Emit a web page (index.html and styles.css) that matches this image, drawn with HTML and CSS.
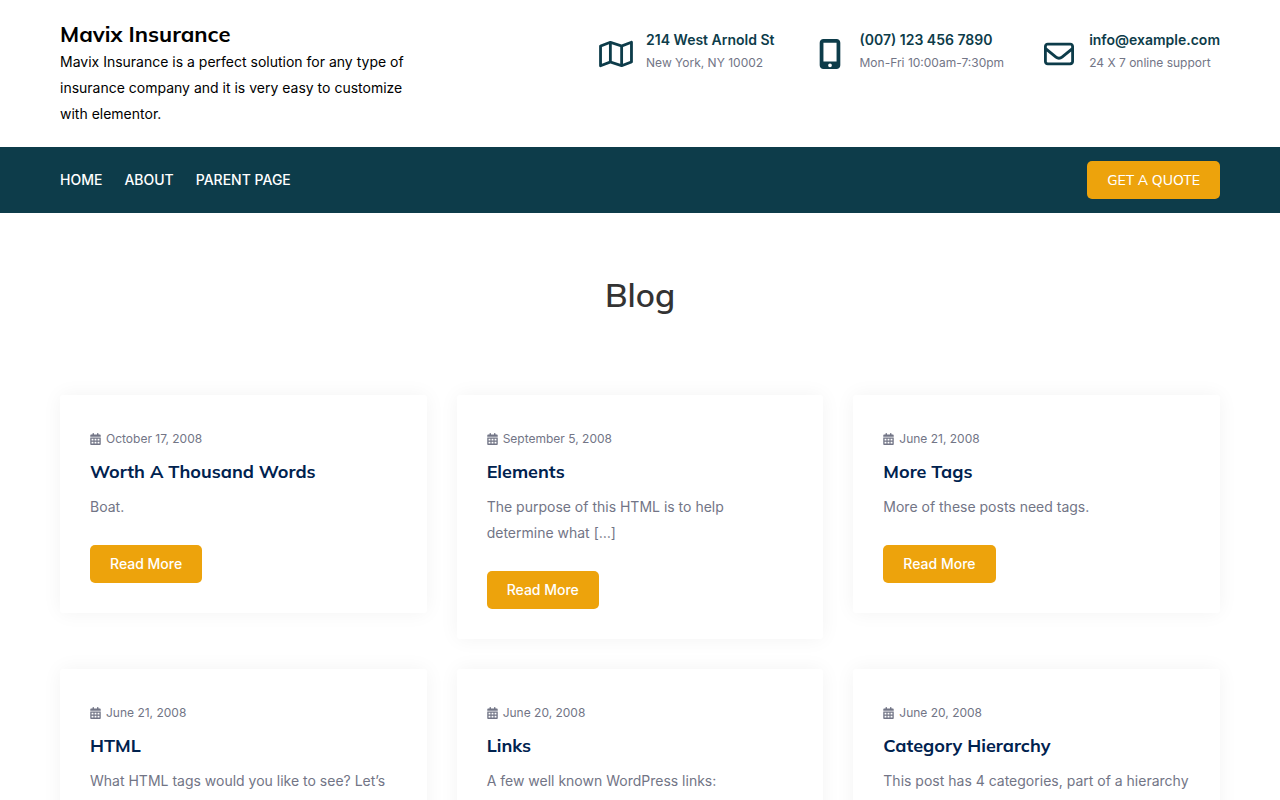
FILE: index.html
```html
<!DOCTYPE html>
<html lang="en">
<head>
    <meta charset="UTF-8">
    <meta name="viewport" content="width=device-width, initial-scale=1">
    <title>Blog - Mavix Insurance</title>
    <link rel="stylesheet" href="styles.css">
</head>
<body>
<svg class="sprite" aria-hidden="true">
    <symbol id="calendar" viewBox="0 0 448 512">
        <path d="M128 0c17.700 0 32 14.300 32 32V64H288V32c0-17.700 14.300-32 32-32s32 14.300 32 32V64h48c26.500 0 48 21.500 48 48v48H0V112C0 85.500 21.500 64 48 64H96V32c0-17.700 14.300-32 32-32zM0 192H448V464c0 26.500-21.500 48-48 48H48c-26.500 0-48-21.500-48-48V192zm56 56v72h80v-72zm128 0v72h80v-72zm128 0v72h80v-72zM56 376v72h80v-72zm128 0v72h80v-72zm128 0v72h80v-72z" fill-rule="evenodd"/>
    </symbol>
</svg>

<header class="site-header">
    <div class="container header-inner">
        <div class="branding">
            <p class="site-title"><a href="#">Mavix Insurance</a></p>
            <p class="site-description">Mavix Insurance is a perfect solution for any type of insurance company and it is very easy to customize with elementor.</p>
        </div>
        <div class="contact-list">
            <div class="contact">
                <svg class="contact-icon" viewBox="0 0 576 512" width="34" height="30"><path d="M565.6 36.2C572.1 40.7 576 48.1 576 56V392c0 10-6.2 18.9-15.5 22.4l-168 64c-5.2 2-10.9 2.1-16.1 .3L192.500 417.500l-160 61c-7.4 2.8-15.7 1.8-22.2-2.7S0 463.900 0 456V120c0-10 6.100-18.900 15.500-22.400l168-64c5.200-2 10.900-2.100 16.100-.3L383.500 94.500l160-61c7.400-2.800 15.700-1.800 22.200 2.700zM48 136.500V421.200l120-45.700V90.800L48 136.500zM360 422.700V137.300l-144-48V374.700l144 48zm48-1.500l120-45.700V90.800L408 136.500V421.200z"/></svg>
                <div>
                    <p class="contact-title">214 West Arnold St</p>
                    <p class="contact-text">New York, NY 10002</p>
                </div>
            </div>
            <div class="contact">
                <svg class="contact-icon" viewBox="0 0 384 512" width="23" height="30"><path d="M16 64C16 28.700 44.700 0 80 0H304c35.300 0 64 28.700 64 64V448c0 35.300-28.700 64-64 64H80c-35.300 0-64-28.700-64-64V64zM224 448a32 32 0 1 0 -64 0 32 32 0 1 0 64 0zM304 64H80V384H304V64z" fill-rule="evenodd"/></svg>
                <div>
                    <p class="contact-title">(007) 123 456 7890</p>
                    <p class="contact-text">Mon-Fri 10:00am-7:30pm</p>
                </div>
            </div>
            <div class="contact">
                <svg class="contact-icon" viewBox="0 0 512 512" width="30" height="30"><path d="M64 112c-8.800 0-16 7.200-16 16v22.100L220.500 291.700c20.700 17 50.400 17 71.100 0L464 150.100V128c0-8.800-7.200-16-16-16H64zM48 212.200V384c0 8.800 7.200 16 16 16H448c8.800 0 16-7.200 16-16V212.200L322 328.800c-38.400 31.500-93.700 31.500-132 0L48 212.200zM0 128C0 92.700 28.700 64 64 64H448c35.300 0 64 28.700 64 64V384c0 35.300-28.700 64-64 64H64c-35.300 0-64-28.700-64-64V128z"/></svg>
                <div>
                    <p class="contact-title">info@example.com</p>
                    <p class="contact-text">24 X 7 online support</p>
                </div>
            </div>
        </div>
    </div>
</header>

<div class="navbar">
    <div class="container navbar-inner">
        <nav class="menu">
            <a href="#">HOME</a>
            <a href="#">ABOUT</a>
            <a href="#">PARENT PAGE</a>
        </nav>
        <a class="btn btn-quote" href="#">GET A QUOTE</a>
    </div>
</div>

<main class="container">
    <h1 class="page-title">Blog</h1>
    <div class="posts">
        <article class="post">
            <p class="post-date"><svg class="date-icon"><use href="#calendar"/></svg>October 17, 2008</p>
            <h2 class="post-title"><a href="#">Worth A Thousand Words</a></h2>
            <p class="post-text">Boat.</p>
            <a class="btn" href="#">Read More</a>
        </article>
        <article class="post">
            <p class="post-date"><svg class="date-icon"><use href="#calendar"/></svg>September 5, 2008</p>
            <h2 class="post-title"><a href="#">Elements</a></h2>
            <p class="post-text">The purpose of this HTML is to help determine what […]</p>
            <a class="btn" href="#">Read More</a>
        </article>
        <article class="post">
            <p class="post-date"><svg class="date-icon"><use href="#calendar"/></svg>June 21, 2008</p>
            <h2 class="post-title"><a href="#">More Tags</a></h2>
            <p class="post-text">More of these posts need tags.</p>
            <a class="btn" href="#">Read More</a>
        </article>
        <article class="post">
            <p class="post-date"><svg class="date-icon"><use href="#calendar"/></svg>June 21, 2008</p>
            <h2 class="post-title"><a href="#">HTML</a></h2>
            <p class="post-text">What HTML tags would you like to see? Let’s</p>
            <a class="btn" href="#">Read More</a>
        </article>
        <article class="post">
            <p class="post-date"><svg class="date-icon"><use href="#calendar"/></svg>June 20, 2008</p>
            <h2 class="post-title"><a href="#">Links</a></h2>
            <p class="post-text">A few well known WordPress links:</p>
            <a class="btn" href="#">Read More</a>
        </article>
        <article class="post">
            <p class="post-date"><svg class="date-icon"><use href="#calendar"/></svg>June 20, 2008</p>
            <h2 class="post-title"><a href="#">Category Hierarchy</a></h2>
            <p class="post-text">This post has 4 categories, part of a hierarchy</p>
            <a class="btn" href="#">Read More</a>
        </article>
    </div>
</main>
</body>
</html>
```
FILE: styles.css
```css
* {
    box-sizing: border-box;
}

body {
    margin: 0;
    background-color: #fff;
    color: #727586;
    font-family: Inter, sans-serif;
    font-size: 14px;
    line-height: 26px;
}

h1, h2, p {
    margin: 0;
}

a {
    color: inherit;
    text-decoration: none;
}

.sprite {
    display: none;
}

.container {
    max-width: 1200px;
    margin: 0 auto;
    padding: 0 20px;
}

.header-inner {
    display: flex;
    justify-content: space-between;
    align-items: flex-start;
    padding-top: 20px;
    padding-bottom: 20px;
}

.branding {
    width: 30%;
    color: #000;
}

.site-title {
    font-family: Mulish, Lato, sans-serif;
    font-size: 22px;
    font-weight: 700;
    line-height: 29px;
}

.contact-list {
    display: flex;
    gap: 36px;
    padding-top: 7px;
}

.contact {
    display: flex;
    align-items: center;
    gap: 11px;
}

.contact-icon {
    width: 38px;
    margin-top: 8px;
    fill: #0d3c4a;
}

.contact-title {
    color: #0d3c4a;
    font-weight: 600;
}

.contact-text {
    font-size: 12px;
    line-height: 20px;
}

.navbar {
    background-color: #0d3c4a;
    color: #fff;
}

.navbar-inner {
    display: flex;
    justify-content: space-between;
    align-items: center;
    padding-top: 14px;
    padding-bottom: 14px;
}

.menu {
    display: flex;
    gap: 22px;
    font-weight: 500;
}

.btn {
    display: inline-block;
    padding: 6px 20px;
    border-radius: 5px;
    background-color: #eda30c;
    color: #fff;
    font-weight: 500;
}

.btn-quote {
    font-family: Mulish, Lato, sans-serif;
}

.page-title {
    padding: 60px 0 78px;
    color: #333;
    font-family: Mulish, Lato, sans-serif;
    font-size: 33px;
    font-weight: 600;
    line-height: 44px;
    text-align: center;
}

.posts {
    display: grid;
    grid-template-columns: repeat(3, 1fr);
    align-items: start;
    gap: 30px;
    padding-bottom: 60px;
}

.post {
    padding: 30px;
    border-radius: 3px;
    background-color: #fff;
    box-shadow: 0 0 20px rgba(0, 0, 0, 0.05);
}

.post-date {
    display: flex;
    align-items: center;
    gap: 5px;
    font-size: 12px;
    line-height: 28px;
}

.date-icon {
    width: 11px;
    height: 12px;
    fill: currentColor;
}

.post-title {
    margin: 6px 0 9px;
    color: #00224f;
    font-family: Mulish, Lato, sans-serif;
    font-size: 18px;
    font-weight: 700;
}

.post-text {
    margin-bottom: 25px;
}
```
